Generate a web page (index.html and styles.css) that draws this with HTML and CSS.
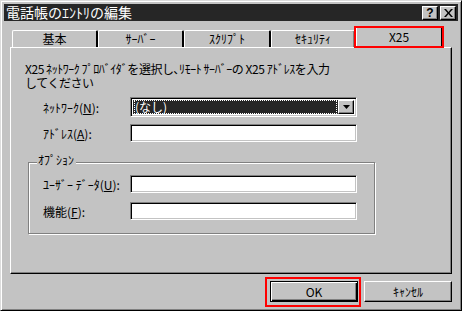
FILE: index.html
```html
<!DOCTYPE html>
<html lang="ja">
<head>
<meta charset="utf-8">
<link rel="stylesheet" href="styles.css">
</head>
<body>
<div class="window">
  <div class="titlebar">
    <span class="title">電話帳のｴﾝﾄﾘの編集</span>
    <div class="tbtns">
      <span class="tbtn">?</span>
      <span class="tbtn x">
        <svg width="9" height="8" viewBox="0 0 9 8"><path d="M0 0h2l2.5 3 2.5-3h2l-3.5 4 3.5 4h-2l-2.5-3-2.5 3h-2l3.5-4z" fill="#000"/></svg>
      </span>
    </div>
  </div>
  <div class="content">
    <div class="tabs">
      <div class="tab t1">基本</div>
      <div class="tab t2">ｻｰﾊﾞｰ</div>
      <div class="tab t3">ｽｸﾘﾌﾟﾄ</div>
      <div class="tab t4">ｾｷｭﾘﾃｨ</div>
      <div class="tab sel mark">X25</div>
    </div>
    <div class="panel">
      <p class="intro">X25 ﾈｯﾄﾜｰｸ ﾌﾟﾛﾊﾞｲﾀﾞを選択し､ﾘﾓｰﾄ ｻｰﾊﾞｰの X25 ｱﾄﾞﾚｽを入力<br>してください</p>
      <div class="row r1">
        <label class="lbl">ﾈｯﾄﾜｰｸ(<u>N</u>):</label>
        <div class="combo">
          <div class="combo-val"><span class="focus">(なし)</span></div>
          <div class="combo-btn">
            <svg width="7" height="4" viewBox="0 0 7 4"><path d="M0 0h7l-3.5 4z" fill="#000"/></svg>
          </div>
        </div>
      </div>
      <div class="row r2">
        <label class="lbl">ｱﾄﾞﾚｽ(<u>A</u>):</label>
        <div class="edit"></div>
      </div>
      <div class="group">
        <div class="legend">ｵﾌﾟｼｮﾝ</div>
        <div class="row g1">
          <label class="lbl">ﾕｰｻﾞｰ ﾃﾞｰﾀ(<u>U</u>):</label>
          <div class="edit"></div>
        </div>
        <div class="row g2">
          <label class="lbl">機能(<u>F</u>):</label>
          <div class="edit"></div>
        </div>
      </div>
    </div>
    <div class="buttons">
      <button class="btn default mark">OK</button>
      <button class="btn">ｷｬﾝｾﾙ</button>
    </div>
  </div>
</div>
</body>
</html>
```
FILE: styles.css
```css
* { box-sizing: border-box; }
html, body { margin: 0; padding: 0; }
body {
  width: 462px;
  height: 311px;
  background: #c3c3c3;
  font-family: "Noto Sans CJK JP", "DejaVu Sans", sans-serif;
  font-size: 12px;
  color: #000;
  overflow: hidden;
}
.window {
  width: 462px;
  height: 311px;
  background: #c3c3c3;
  border-top: 1px solid #dcdcdc;
  border-left: 1px solid #dcdcdc;
  border-right: 1px solid #000;
  border-bottom: 1px solid #000;
  box-shadow: inset 1px 1px #fff, inset -1px -1px #808080;
  padding: 3px 3px 2px 3px;
  display: flex;
  flex-direction: column;
}
.titlebar {
  height: 17px;
  background: #262626;
  display: flex;
  align-items: center;
  justify-content: space-between;
  padding: 0 2px 0 2px;
}
.title {
  color: #fff;
  font-size: 14px;
  line-height: 17px;
}
.tbtns { display: flex; gap: 2px; }
.tbtn {
  width: 16px;
  height: 14px;
  background: #c3c3c3;
  border-top: 1px solid #fff;
  border-left: 1px solid #fff;
  border-right: 1px solid #000;
  border-bottom: 1px solid #000;
  box-shadow: inset -1px -1px #808080;
  display: flex;
  align-items: center;
  justify-content: center;
  font-family: "Liberation Sans", sans-serif;
  font-weight: bold;
  font-size: 12px;
  line-height: 12px;
}
.content {
  flex: 1;
  padding: 5px 0 0 6px;
  display: flex;
  flex-direction: column;
}
.tabs {
  display: flex;
  align-items: flex-end;
  height: 21px;
  margin-left: 2px;
  position: relative;
  z-index: 1;
}
.tab {
  height: 17px;
  width: 86px;
  border-top: 1px solid #fff;
  border-left: 1px solid #fff;
  border-right: 2px solid #000;
  border-radius: 2px 2px 0 0;
  text-align: center;
  line-height: 16px;
  background: #c3c3c3;
}
.tab.t3 { width: 87px; }
.tab.t4 { width: 84px; border-right: 1px solid #000; box-shadow: inset -1px 0 #808080; }
.tab.sel {
  height: 22px;
  width: 87px;
  margin-left: 1px;
  margin-bottom: -1px;
  border-right: 2px solid #000;
  line-height: 20px;
}
.mark { position: relative; }
.mark::after {
  content: "";
  position: absolute;
  border: 2px solid #f00;
  pointer-events: none;
}
.tab.mark::after { left: -3px; right: -3px; top: -1px; bottom: 0; }
.panel {
  width: 442px;
  height: 227px;
  border-top: 1px solid #fff;
  border-left: 1px solid #fff;
  border-right: 1px solid #000;
  border-bottom: 1px solid #000;
  box-shadow: inset -1px -1px #808080;
  padding: 14px 0 0 14px;
}
.intro {
  margin: 0;
  line-height: 14px;
  white-space: nowrap;
  letter-spacing: -0.45px;
}
.row {
  display: flex;
  align-items: center;
  margin-left: 18px;
}
.lbl {
  width: 87px;
  white-space: nowrap;
}
.r1 { margin-top: 7px; height: 20px; }
.r2 { margin-top: 7px; height: 18px; }
.combo {
  width: 227px;
  height: 20px;
  background: #fff;
  border-top: 1px solid #808080;
  border-left: 1px solid #808080;
  border-right: 1px solid #fff;
  border-bottom: 1px solid #fff;
  box-shadow: inset 1px 1px #000, inset -1px -1px #c3c3c3;
  padding: 2px;
  display: flex;
}
.combo-val {
  flex: 1;
  background: #262626;
  color: #fff;
  padding: 0 1px;
  display: flex;
  align-items: center;
}
.focus {
  display: block;
  width: 100%;
  height: 100%;
  outline: 1px dotted #fff;
  outline-offset: -1px;
  line-height: 14px;
  padding-left: 1px;
}
.combo-btn {
  width: 16px;
  height: 100%;
  background: #c3c3c3;
  border-top: 1px solid #fff;
  border-left: 1px solid #fff;
  border-right: 1px solid #000;
  border-bottom: 1px solid #000;
  box-shadow: inset -1px -1px #808080;
  display: flex;
  align-items: center;
  justify-content: center;
}
.edit {
  width: 227px;
  height: 18px;
  background: #fff;
  border-top: 1px solid #808080;
  border-left: 1px solid #808080;
  border-right: 1px solid #fff;
  border-bottom: 1px solid #fff;
  box-shadow: inset 1px 1px #000, inset -1px -1px #c3c3c3;
}
.group {
  margin-top: 20px;
  margin-left: 3px;
  width: 347px;
  border: 1px solid #808080;
  box-shadow: inset 1px 1px #fff, 1px 1px #fff;
  padding: 0 0 13px 0;
}
.legend {
  display: table;
  margin: -10px 0 0 8px;
  padding: 0 2px 0 1px;
  background: #c3c3c3;
  line-height: 13px;
}
.group .row { margin-left: 14px; height: 18px; }
.g1 { margin-top: 9px; }
.g2 { margin-top: 9px; }
.buttons {
  display: flex;
  gap: 6px;
  margin: 7px 0 0 260px;
}
.btn {
  width: 88px;
  height: 21px;
  font: inherit;
  line-height: 17px;
  background: #c3c3c3;
  color: #000;
  border-top: 1px solid #fff;
  border-left: 1px solid #fff;
  border-right: 1px solid #000;
  border-bottom: 1px solid #000;
  box-shadow: inset -1px -1px #808080;
  padding: 0;
}
.btn.default {
  border: 1px solid #000;
  box-shadow: inset 1px 1px #fff, inset -1px -1px #000, inset -2px -2px #808080;
}
.btn.mark::after { left: -6px; right: -4px; top: -5px; bottom: -6px; }
```
